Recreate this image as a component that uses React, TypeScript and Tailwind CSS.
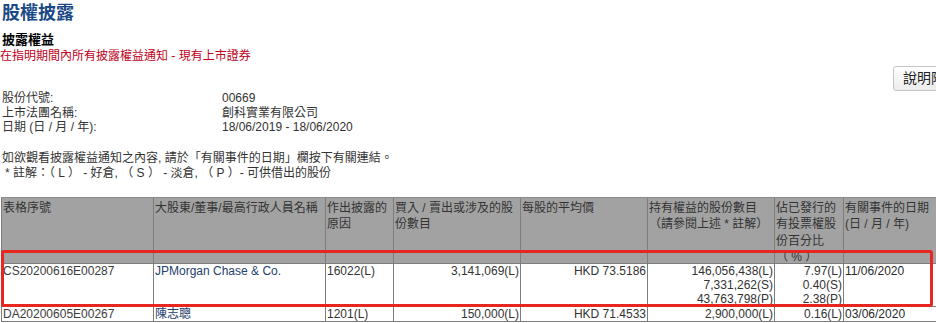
const headers = [
  { lines: ["表格序號"] },
  { lines: ["大股東/董事/最高行政人員名稱"] },
  { lines: ["作出披露的", "原因"] },
  { lines: ["買入 / 賣出或涉及的股", "份數目"] },
  { lines: ["每股的平均價"] },
  { lines: ["持有權益的股份數目", "（請參閱上述 * 註解）"] },
  { lines: ["佔已發行的", "有投票權股", "份百分比", "（ % ）"] },
  { lines: ["有關事件的日期", "(日 / 月 / 年)"] },
];

const rows = [
  {
    form: "CS20200616E00287",
    name: "JPMorgan Chase & Co.",
    reason: "16022(L)",
    shares: "3,141,069(L)",
    price: "HKD 73.5186",
    held: ["146,056,438(L)", "7,331,262(S)", "43,763,798(P)"],
    pct: ["7.97(L)", "0.40(S)", "2.38(P)"],
    date: "11/06/2020",
  },
  {
    form: "DA20200605E00267",
    name: "陳志聰",
    reason: "1201(L)",
    shares: "150,000(L)",
    price: "HKD 71.4533",
    held: ["2,900,000(L)"],
    pct: ["0.16(L)"],
    date: "03/06/2020",
  },
];

function InfoRow({ label, value }: { label: string; value: string }) {
  return (
    <div className="flex">
      <div className="w-[220px]">{label}</div>
      <div>{value}</div>
    </div>
  );
}

export default function App() {
  return (
    <div className="w-[936px] h-[323px] overflow-hidden bg-white">
      <div className="relative w-[960px] font-['Liberation_Sans','Noto_Sans_CJK_TC',sans-serif] text-[12px] text-[#333]">
        <h1 className="h-[26px] leading-[26px] pl-[2px] text-[18px] font-bold text-[#1a4a86]">
          股權披露
        </h1>
        <h2 className="mt-[6px] leading-[16px] pl-[2px] text-[13px] font-bold text-black">
          披露權益
        </h2>
        <div className="leading-[16px] text-[#c00018]">
          在指明期間內所有披露權益通知 - 現有上市證券
        </div>

        <div className="flex h-[27px] justify-end pr-[6px]">
          <button className="mt-[2px] h-[25px] w-[61px] rounded-[3px] border border-[#c4c4c4] bg-gradient-to-b from-white to-[#ececec] pl-[9px] text-left text-[14px] leading-[23px] text-[#222] whitespace-nowrap overflow-hidden">
            說明附註
          </button>
        </div>

        <div className="pl-[2px] leading-[14.5px]">
          <InfoRow label="股份代號:" value="00669" />
          <InfoRow label="上市法團名稱:" value="創科實業有限公司" />
          <InfoRow label="日期 (日 / 月 / 年):" value="18/06/2019 - 18/06/2020" />
        </div>

        <div className="mt-[16px] pl-[2px] leading-[15px]">
          <div>如欲觀看披露權益通知之內容, 請於「有關事件的日期」欄按下有關連結。</div>
          <div className="pl-[3px]">
            * 註解：（ L ） - 好倉, （ S ） - 淡倉, （ P ）- 可供借出的股份
          </div>
        </div>

        <div className="mt-[16px] ml-px grid grid-cols-[152px_172px_68px_127px_127px_127px_69px_100px] border-t border-[#8a8a8a]">
          {headers.map((h, i) => (
            <div
              key={i}
              className="h-[66px] border-l border-b border-[#7d7d7d] bg-[#a2a2a2] pl-[1px] pt-[2px] leading-[16.5px] text-[#333]"
            >
              {h.lines.map((l, j) => (
                <div key={j} className="whitespace-nowrap">
                  {l}
                </div>
              ))}
            </div>
          ))}

          {rows.map((r, i) => (
            <div key={i} className="contents">
              <div className="border-l border-b border-[#7d7d7d] pl-[1px] leading-[14px] text-[#3c3c3c]">
                {r.form}
              </div>
              <div className="border-l border-b border-[#7d7d7d] pl-[1px] leading-[14px] text-[#23406b]">
                {r.name}
              </div>
              <div className="border-l border-b border-[#7d7d7d] pl-[1px] leading-[14px]">
                {r.reason}
              </div>
              <div className="border-l border-b border-[#7d7d7d] pr-[1px] text-right leading-[14px]">
                {r.shares}
              </div>
              <div className="border-l border-b border-[#7d7d7d] pr-[1px] text-right leading-[14px]">
                {r.price}
              </div>
              <div className="border-l border-b border-[#7d7d7d] pr-[1px] text-right leading-[14px]">
                {r.held.map((v) => (
                  <div key={v}>{v}</div>
                ))}
              </div>
              <div className="border-l border-b border-[#7d7d7d] pr-[1px] text-right leading-[14px]">
                {r.pct.map((v) => (
                  <div key={v}>{v}</div>
                ))}
              </div>
              <div className="border-l border-b border-[#7d7d7d] pl-[1px] leading-[14px] text-[#2a2a2a]">
                {r.date}
              </div>
            </div>
          ))}
        </div>

        {/* highlight annotation */}
        <div className="absolute left-[1px] top-[250px] h-[57px] w-[932px] rounded-[3px] border-[3px] border-[#e6261f]" />
      </div>
    </div>
  );
}
